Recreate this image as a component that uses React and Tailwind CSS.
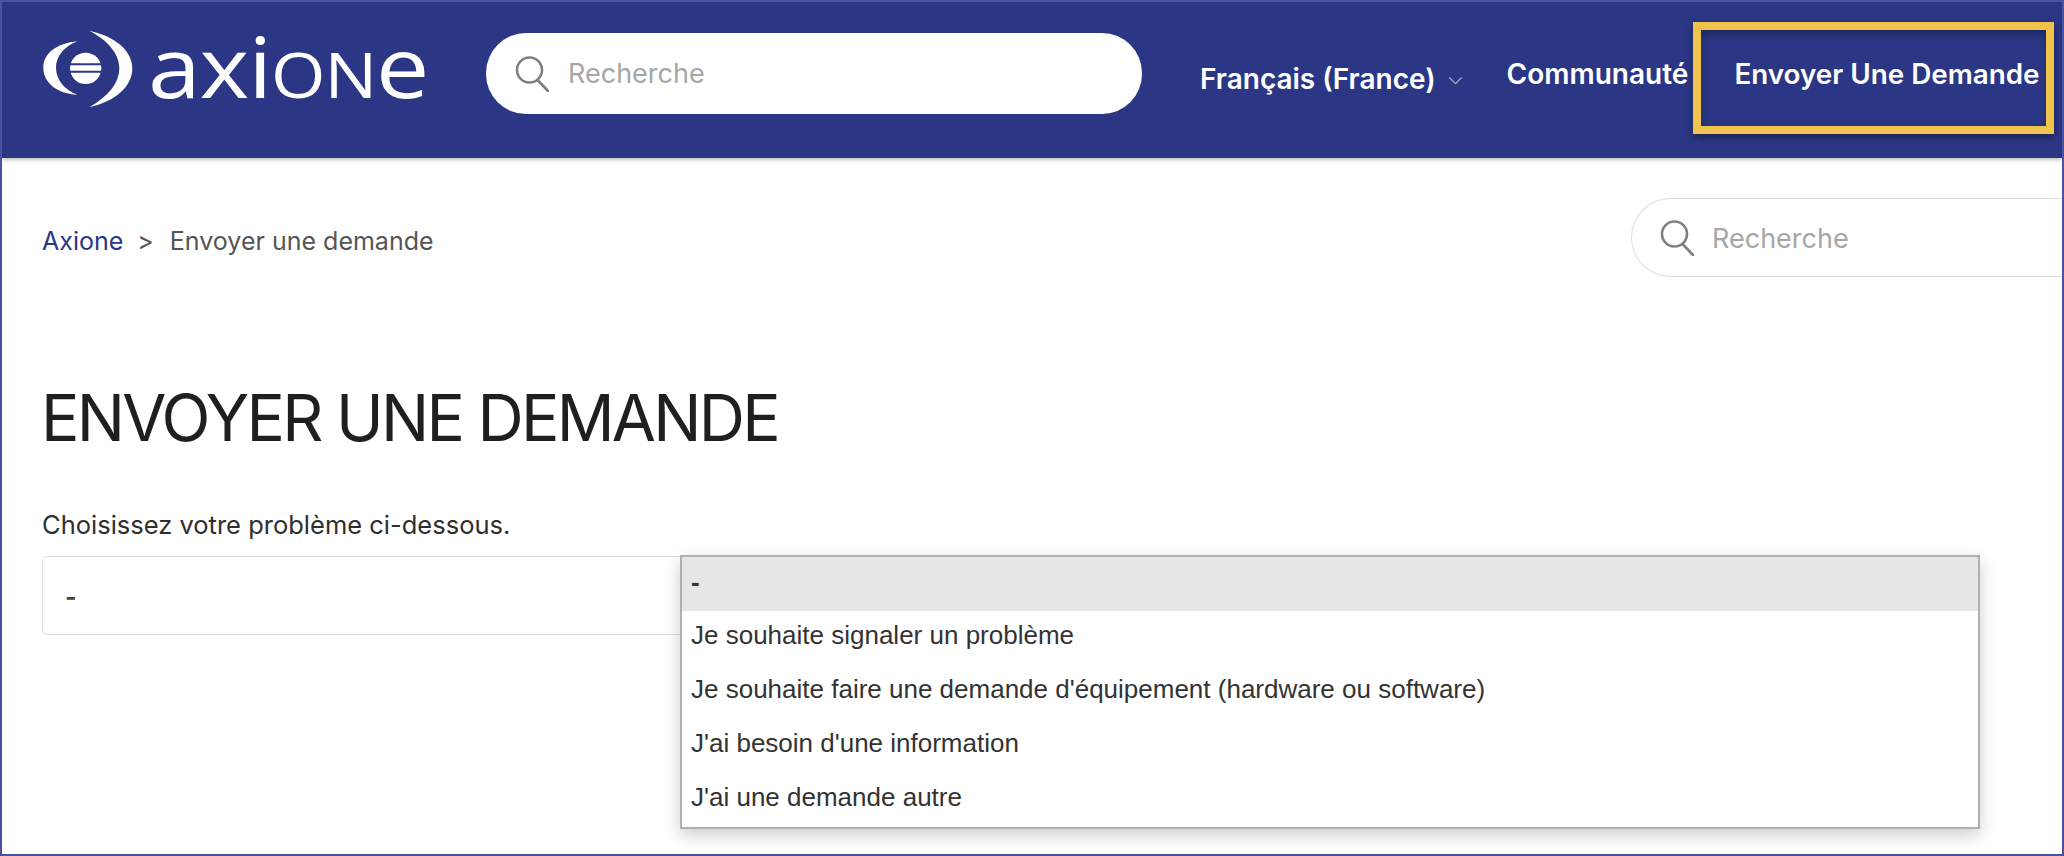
import React from "react";

const options = [
  "Je souhaite signaler un problème",
  "Je souhaite faire une demande d'équipement (hardware ou software)",
  "J'ai besoin d'une information",
  "J'ai une demande autre",
];

function SearchIcon({ className }) {
  return (
    <svg viewBox="0 0 34 36" fill="none" stroke="#808080" strokeWidth="2.6" className={className}>
      <circle cx="14.5" cy="14" r="12.5" />
      <path d="M22.5 24 L33 35" strokeLinecap="round" />
    </svg>
  );
}

function Logo() {
  return (
    <div className="flex items-center">
      <svg viewBox="60 24 288 246" className="w-[96px] h-[82px] shrink-0" fill="#fff">
        <path d="M172 64 C110 70 70 100 70 143 C70 190 115 222 172 224 C135 210 108 180 108 143 C108 108 135 78 172 64Z" />
        <path d="M208 32 C290 50 337 95 337 145 C337 200 285 245 208 262 C265 228 298 190 298 145 C298 100 262 60 208 32Z" />
        <circle cx="197" cy="145" r="47" />
        <path d="M148 133 H246 M148 155 H246" stroke="#2b3785" strokeWidth="6" />
      </svg>
      <div className="ml-[12px] mt-[-6px] flex origin-left scale-x-[1.13] items-baseline font-['Open_Sans',sans-serif] font-medium leading-none text-white">
        <span className="text-[84px] tracking-[-1px]">axi</span>
        <span className="text-[62px] tracking-[-1px]">ON</span>
        <span className="text-[84px]">e</span>
      </div>
    </div>
  );
}

export default function App() {
  return (
    <div className="relative h-[856px] w-[2064px] overflow-hidden border-2 border-[#4a52a3] bg-white font-['Inter',sans-serif]">
      <header className="flex h-[156px] items-start bg-[#2b3785] pl-[38px] shadow-[0_2px_4px_rgba(0,0,0,0.25)]">
        <div className="mt-[26px] w-[446px] shrink-0">
          <Logo />
        </div>
        <div className="mt-[31px] flex h-[81px] w-[656px] shrink-0 items-center rounded-[40px] bg-white pl-[29px]">
          <SearchIcon className="h-[36px] w-[34px]" />
          <span className="ml-[19px] mt-[1px] text-[27px] text-[#a6a6a6]">Recherche</span>
        </div>
        <div className="ml-[58px] mt-[59px] flex shrink-0 items-center text-[28px] font-semibold leading-[36px] text-white">
          Français (France)
          <svg viewBox="0 0 16 10" fill="none" stroke="#a9aed6" strokeWidth="1.4" className="ml-[12px] mt-[2px] h-[9px] w-[15px]">
            <path d="M1 1.5 L8 8.5 L15 1.5" />
          </svg>
        </div>
        <div className="ml-[44px] mt-[54px] shrink-0 text-[28px] font-semibold leading-[36px] text-white">Communauté</div>
        <div className="ml-[5px] mt-[20px] h-[112px] w-[361px] shrink-0 whitespace-nowrap border-[8px] border-[#f0c44c] pl-[33px] pt-[26px] text-[27.8px] font-semibold leading-[36px] text-white shadow-[0_3px_8px_rgba(0,0,0,0.4),inset_0_4px_8px_rgba(0,0,0,0.3)]">
          Envoyer Une Demande
        </div>
      </header>

      <main className="pl-[40px]">
        <div className="mt-[40px] flex items-start justify-between">
          <div className="flex text-[25px] leading-[86px] text-[#555555]">
            <span className="text-[#2b3785]">Axione</span>
            <span className="ml-[14px]">&gt;</span>
            <span className="ml-[16px]">Envoyer une demande</span>
          </div>
          <div className="flex h-[79px] w-[431px] items-center rounded-l-[40px] border border-r-0 border-[#dddddd] pl-[28px]">
            <SearchIcon className="h-[36px] w-[34px]" />
            <span className="ml-[18px] mt-[4px] text-[27px] text-[#a6a6a6]">Recherche</span>
          </div>
        </div>

        <h1 className="-ml-[1px] mt-[98px] text-[64px] font-normal leading-[72px] tracking-[-2.7px] text-[#1f1f1f]">ENVOYER UNE DEMANDE</h1>

        <p className="mt-[53px] text-[25.5px] leading-[36px] text-[#2f2f2f]">Choisissez votre problème ci-dessous.</p>

        <div className="relative mt-[13px] h-[79px] w-[1000px] rounded-[6px] border border-[#dddddd] pl-[22px] text-[25px] font-semibold leading-[81px] text-[#444444]">
          -
        </div>
      </main>

      {/* liste ouverte du select, par-dessus le contenu */}
      <div className="absolute left-[678px] top-[553px] w-[1300px] border-2 border-[#b0b0b0] bg-white font-['Liberation_Sans',sans-serif] text-[26px] text-[#333333] shadow-[0_6px_16px_rgba(0,0,0,0.2)]">
        <div className="h-[54px] bg-[#e6e6e6] pl-[9px] font-bold leading-[50px]">-</div>
        {options.map((opt) => (
          <div key={opt} className="h-[54px] pl-[9px] leading-[48px]">
            {opt}
          </div>
        ))}
      </div>
    </div>
  );
}
